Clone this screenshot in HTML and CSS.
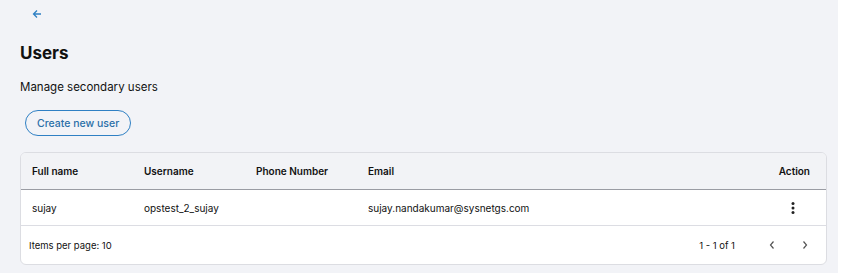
FILE: index.html
```html
<!DOCTYPE html>
<html lang="en">
<head>
  <meta charset="UTF-8">
  <title>Users</title>
  <link rel="stylesheet" href="styles.css">
</head>
<body>
  <main class="page">
    <a class="back" href="#">
      <svg width="10" height="10" viewBox="0 0 10 10"><path d="M9 5H1.5M5 1.5L1.5 5 5 8.5" fill="none" stroke="#2f80c4" stroke-width="1.3"/></svg>
    </a>

    <h2 class="title">Users</h2>
    <p class="subtitle">Manage secondary users</p>

    <button class="btn-outline" type="button">Create new user</button>

    <div class="card">
      <table class="users">
        <thead>
          <tr>
            <th class="col-name">Full name</th>
            <th class="col-user">Username</th>
            <th class="col-phone">Phone Number</th>
            <th>Email</th>
            <th class="col-action">Action</th>
          </tr>
        </thead>
        <tbody>
          <tr>
            <td>sujay</td>
            <td>opstest_2_sujay</td>
            <td></td>
            <td>sujay.nandakumar@sysnetgs.com</td>
            <td class="col-action">
              <svg class="kebab" width="4" height="12" viewBox="0 0 4 12"><circle cx="2" cy="1.6" r="1.5"/><circle cx="2" cy="6" r="1.5"/><circle cx="2" cy="10.4" r="1.5"/></svg>
            </td>
          </tr>
        </tbody>
      </table>

      <div class="paginator">
        <span>Items per page: 10</span>
        <div class="pager">
          <span class="range">1 - 1 of 1</span>
          <button class="nav" type="button"><svg width="8" height="10" viewBox="0 0 8 10"><path d="M5.5 1.5L2.5 5l3 3.5" fill="none" stroke="#555" stroke-width="1.2"/></svg></button>
          <button class="nav" type="button"><svg width="8" height="10" viewBox="0 0 8 10"><path d="M2.5 1.5L5.5 5l-3 3.5" fill="none" stroke="#555" stroke-width="1.2"/></svg></button>
        </div>
      </div>
    </div>
  </main>
</body>
</html>
```

FILE: styles.css
```css
body {
  margin: 0;
  background: #fff;
  font-family: Inter, "Noto Sans", sans-serif;
  color: #111;
}
.page {
  margin-right: 3px;
  min-height: 273px;
  box-sizing: border-box;
  background: #f2f3f7;
  padding: 3px 11px 0 20px;
}
.back {
  display: block;
  width: 12px;
  margin-left: 12px;
  height: 12px;
}
.title {
  margin: 26px 0 0;
  font-size: 17px;
  font-weight: 700;
  line-height: 24px;
}
.subtitle {
  margin: 14px 0 0;
  font-size: 11.5px;
  line-height: 16px;
}
.btn-outline {
  margin: 15px 0 0 5px;
  height: 26px;
  padding: 0 11px;
  border: 1px solid #2f80c4;
  border-radius: 13px;
  background: transparent;
  color: #2a6fa8;
  font-family: inherit;
  font-size: 10.5px;
  font-weight: 500;
}
.card {
  margin-top: 16px;
  background: #fff;
  border: 1px solid #dcdde2;
  border-radius: 6px;
  overflow: hidden;
}
.users {
  width: 100%;
  border-collapse: collapse;
  font-size: 10px;
}
.users th {
  background: #f2f3f6;
  height: 35px;
  padding: 0 0 1px 11px;
  text-align: left;
  font-weight: 600;
  border-bottom: 1px solid #9a9ca3;
}
.users td {
  height: 35px;
  padding: 0 0 0 11px;
  border-bottom: 1px solid #dcdde3;
}
.col-name { width: 101px; }
.col-user { width: 101px; }
.col-phone { width: 101px; }
.users .col-action {
  text-align: right;
  padding-right: 16px;
}
.kebab {
  fill: #222;
  margin-right: 15px;
  vertical-align: middle;
}
.paginator {
  height: 38px;
  display: flex;
  align-items: center;
  justify-content: space-between;
  padding: 0 5px 0 8px;
  font-size: 9.5px;
}
.pager {
  display: flex;
  align-items: center;
}
.range {
  margin-right: 20px;
}
.nav {
  width: 33px;
  height: 28px;
  border: none;
  background: none;
  padding: 0;
}
```
